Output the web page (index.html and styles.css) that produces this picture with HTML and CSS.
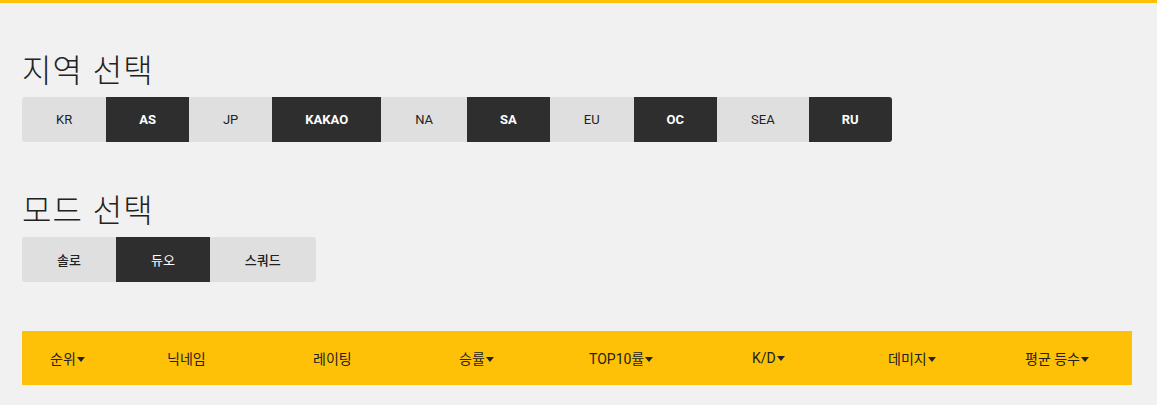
FILE: index.html
```html
<!DOCTYPE html>
<html lang="ko">
<head>
<meta charset="utf-8">
<title>랭킹</title>
<link rel="stylesheet" href="styles.css">
</head>
<body>
<div class="page">
  <section class="section">
    <h2 class="title">지역 선택</h2>
    <div class="btn-group">
      <button class="btn">KR</button>
      <button class="btn dark">AS</button>
      <button class="btn">JP</button>
      <button class="btn dark">KAKAO</button>
      <button class="btn">NA</button>
      <button class="btn dark">SA</button>
      <button class="btn">EU</button>
      <button class="btn dark">OC</button>
      <button class="btn">SEA</button>
      <button class="btn dark">RU</button>
    </div>
  </section>
  <section class="section mode">
    <h2 class="title">모드 선택</h2>
    <div class="btn-group">
      <button class="btn kr">솔로</button>
      <button class="btn dark kr">듀오</button>
      <button class="btn kr">스쿼드</button>
    </div>
  </section>
  <div class="table-head">
    <div class="th sort">순위</div>
    <div class="th">닉네임</div>
    <div class="th">레이팅</div>
    <div class="th sort">승률</div>
    <div class="th sort">TOP10률</div>
    <div class="th sort">K/D</div>
    <div class="th sort">데미지</div>
    <div class="th sort">평균 등수</div>
  </div>
</div>
</body>
</html>
```
FILE: styles.css
```css
* { box-sizing: border-box; }
html, body {
  margin: 0;
  padding: 0;
  background: #f1f1f1;
}
body {
  border-top: 3px solid #ffc107;
  font-family: Roboto, "Noto Sans CJK KR", sans-serif;
  color: #222;
}
.page {
  padding: 42px 25px 0 22px;
}
.section {
  margin-bottom: 43px;
}
.section.mode {
  margin-bottom: 49px;
}
.title {
  margin: 0 0 6px 0;
  font-family: "Noto Sans CJK KR", sans-serif;
  font-weight: 300;
  font-size: 32px;
  line-height: 46px;
  letter-spacing: 1px;
  color: #222;
}
.btn-group {
  display: flex;
}
.btn {
  border: 0;
  margin: 0;
  height: 45px;
  padding: 0 34px;
  background: #dfdfdf;
  color: #222;
  font-family: Roboto, "Noto Sans CJK KR", sans-serif;
  font-size: 13px;
  font-weight: 400;
}
.btn.dark {
  padding: 0 33px;
  background: #2e2e2e;
  color: #fff;
  font-weight: 700;
}
.btn.kr {
  padding: 0 35px;
  font-size: 13px;
  font-weight: 500;
}
.btn.dark.kr {
  font-weight: 400;
}
.btn:first-child { border-radius: 3px 0 0 3px; }
.btn:last-child { border-radius: 0 3px 3px 0; }
.table-head {
  display: grid;
  grid-template-columns: 117px 146px 146px 130px 163px 136px 137px 1fr;
  align-items: center;
  height: 54px;
  padding-left: 28px;
  background: #ffc107;
  box-shadow: 0 2px 0 #e2e2e2;
}
.th {
  font-family: Roboto, "Noto Sans CJK KR", sans-serif;
  font-size: 14px;
  color: #222;
  white-space: nowrap;
}
.th.sort::after {
  content: "";
  display: inline-block;
  width: 0;
  height: 0;
  margin-left: 1px;
  border-left: 4px solid transparent;
  border-right: 4px solid transparent;
  border-top: 5px solid #222;
  vertical-align: 2px;
}
```
